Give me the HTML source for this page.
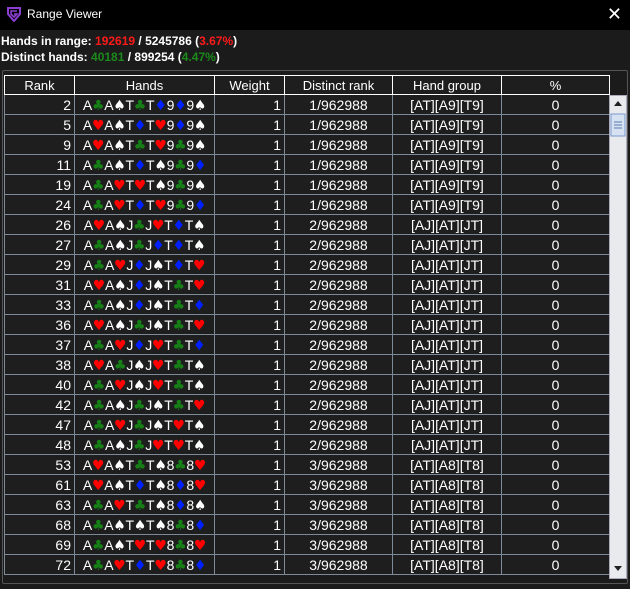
<!DOCTYPE html>
<html><head><meta charset="utf-8"><style>
body{margin:0;width:630px;height:589px;background:#1b1b1b;font-family:"Liberation Sans",Arial,sans-serif;overflow:hidden;position:relative;color:#fff}
#title{position:absolute;left:0;top:0;width:630px;height:30px;background:#000}
#title .t{position:absolute;left:27px;top:7px;font-size:12px;color:#fff}
#title .x{position:absolute;right:8px;top:4px;font-size:18px;color:#fff}
.info{position:absolute;left:1px;font-size:12px;font-weight:bold;color:#fff}
.r{color:#ff1a1a}.g{color:#1b8a1b}
#frame{position:absolute;left:2px;top:70px;width:624px;height:512px;border:1px solid #555;border-radius:2px}
table{position:absolute;left:4px;top:75px;border-collapse:collapse;font-size:14px;table-layout:fixed}
td,th{height:19px;padding:0 3px;border:1px solid #7d8a9a;white-space:nowrap;overflow:hidden;background:#1e1e1e;color:#fff}
th{font-weight:normal;border:1px solid #fff;height:18px;font-size:13px}
td.n{text-align:right}td.c{text-align:center}
td.h{text-align:center;letter-spacing:-0.3px}
td.h span{font-family:"DejaVu Sans",sans-serif;font-size:14px;line-height:14px}
.C{color:#168016}.H{color:#ff0000}.D{color:#0020ff}.S{color:#fff}
#sb{position:absolute;left:609px;top:95px;width:16px;height:482px;background:#e8eaee;border:1px solid #aab}
</style></head><body>
<div id="title"><svg style="position:absolute;left:6px;top:6px" width="16" height="16" viewBox="0 0 16 16"><path d="M2 2h12v6l-6 7-6-7z" fill="none" stroke="#8a3fd1" stroke-width="2"/><path d="M11 5H5v3l3 3 3-3H8" fill="none" stroke="#8a3fd1" stroke-width="1.6"/></svg><span class="t">Range Viewer</span><span class="x">✕</span></div>
<div class="info" style="top:34px">Hands in range: <span class="r">192619</span> / 5245786 (<span class="r">3.67%</span>)</div>
<div class="info" style="top:50px">Distinct hands: <span class="g">40181</span> / 899254 (<span class="g">4.47%</span>)</div>
<div id="frame"></div>
<table id="t"><colgroup><col style="width:70px"><col style="width:140px"><col style="width:70px"><col style="width:108px"><col style="width:109px"><col style="width:108px"></colgroup>
<tr><th>Rank</th><th>Hands</th><th>Weight</th><th>Distinct rank</th><th>Hand group</th><th>%</th></tr>
</table>
<div id="sb"><svg style="position:absolute;left:0;top:0" width="16" height="482"><path d="M4 10h8l-4-5z" fill="#222"/><rect x="1" y="18" width="14" height="22" fill="#d6e2f2" stroke="#7a9ad0"/><path d="M4 26h8M4 29h8M4 32h8" stroke="#5a7ab0"/><path d="M4 470h8l-4 5z" fill="#222"/></svg></div>
<script>
var rows=[
[2,"AcAsTcTd9d9s",1],[5,"AhAsTdTh9d9s",1],[9,"AhAsTcTh9c9s",1],[11,"AcAsTdTs9c9d",1],[19,"AcAhThTs9c9s",1],[24,"AcAhTdTh9c9d",1],
[26,"AhAsJcJhTdTs",2],[27,"AcAsJcJdTdTs",2],[29,"AcAhJdJsTdTh",2],[31,"AhAsJdJsTcTh",2],[33,"AcAsJdJsTcTd",2],[36,"AhAsJcJsTcTh",2],
[37,"AcAhJdJhTcTd",2],[38,"AhAcJsJhTcTs",2],[40,"AcAhJsJhTcTs",2],[42,"AcAsJcJsTcTh",2],[47,"AcAhJcJsThTs",2],[48,"AcAsJcJhThTs",2],
[53,"AhAsTcTs8c8h",3],[61,"AhAsTdTs8d8h",3],[63,"AcAhTcTs8d8s",3],[68,"AcAsTsTs8c8d",3],[69,"AcAsThTh8c8h",3],[72,"AcAhTdTh8c8d",3]];
var sym={c:"♣",h:"♥",d:"♦",s:"♠"},grp={1:"[AT][A9][T9]",2:"[AJ][AT][JT]",3:"[AT][A8][T8]"};
var t=document.getElementById("t"),h="";
rows.forEach(function(r){var s="";for(var i=0;i<12;i+=2){var k=r[1][i+1];s+=r[1][i]+'<span class="'+k.toUpperCase()+'">'+sym[k]+'</span>';}
h+='<tr><td class="n">'+r[0]+'</td><td class="h">'+s+'</td><td class="n">1</td><td class="c">'+r[2]+'/962988</td><td class="c">'+grp[r[2]]+'</td><td class="c">0</td></tr>';});
t.insertAdjacentHTML("beforeend",h);
</script>
</body></html>
